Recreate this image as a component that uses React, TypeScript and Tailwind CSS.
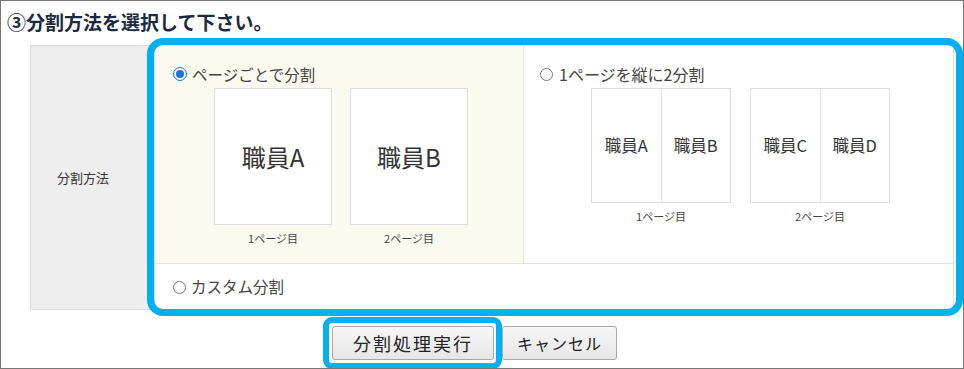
import React from "react";

const font = { fontFamily: '"Noto Sans CJK JP", "Noto Sans", sans-serif' };

const Radio = ({ checked }: { checked?: boolean }) =>
  checked ? (
    <span className="w-[14px] h-[14px] rounded-full border-[1.5px] border-[#1a73e8] flex items-center justify-center bg-white shrink-0">
      <span className="w-[8px] h-[8px] rounded-full bg-[#1a73e8]" />
    </span>
  ) : (
    <span className="w-[13px] h-[13px] rounded-full border border-[#777] bg-white shrink-0" />
  );

const SinglePage = ({ name, caption }: { name: string; caption: string }) => (
  <div className="flex flex-col items-center">
    <div className="w-[118px] h-[137px] bg-white border border-[#ddd] flex items-center justify-center text-[24px] text-[#333]">
      {name}
    </div>
    <div className="mt-[5px] text-[11px] text-[#444]">{caption}</div>
  </div>
);

const SplitPage = ({ left, right, caption }: { left: string; right: string; caption: string }) => (
  <div className="flex flex-col items-center">
    <div className="w-[140px] h-[115px] bg-white border border-[#ddd] flex text-[16.5px] text-[#333]">
      <div className="flex-1 flex items-center justify-center border-r border-[#e2e2e2]">{left}</div>
      <div className="flex-1 flex items-center justify-center">{right}</div>
    </div>
    <div className="mt-[5px] text-[11px] text-[#444]">{caption}</div>
  </div>
);

export default function App() {
  return (
    <div style={font} className="w-[964px] h-[369px] bg-white border border-[#777] overflow-hidden">
      <h2 className="pl-[6px] pt-[9px] h-[44px] text-[19px] font-bold text-[#1b2a40] leading-[24px]">
        ③分割方法を選択して下さい。
      </h2>

      <div className="ml-[29px] w-[924px] flex">
        <div className="w-[125px] h-[265px] bg-[#eeeeee] border border-[#dcdcdc] flex items-center pl-[26px] text-[13px] text-[#333]">
          分割方法
        </div>
        <div className="relative flex-1 border border-l-0 border-[#ddd] flex flex-col">
          <div className="flex h-[218px] border-b border-[#e2e2e2]">
            <div className="w-[369px] bg-[#fbfaef] border-r border-[#e5e5e5] pl-[18px] pt-[19px]">
              <label className="flex items-center gap-[5px] text-[15.5px] text-[#444] leading-[18px]">
                <Radio checked />
                ページごとで分割
              </label>
              <div className="flex gap-[18px] pl-[41px] mt-[5px]">
                <SinglePage name="職員A" caption="1ページ目" />
                <SinglePage name="職員B" caption="2ページ目" />
              </div>
            </div>
            <div className="flex-1 bg-white pl-[16px] pt-[19px]">
              <label className="flex items-center gap-[6px] text-[16px] text-[#444] leading-[18px]">
                <Radio />
                1ページを縦に2分割
              </label>
              <div className="flex gap-[19px] pl-[51px] mt-[5px]">
                <SplitPage left="職員A" right="職員B" caption="1ページ目" />
                <SplitPage left="職員C" right="職員D" caption="2ページ目" />
              </div>
            </div>
          </div>
          <div className="flex-1 flex items-center pl-[18px] pt-[1px] bg-white">
            <label className="flex items-center gap-[5px] text-[15.5px] text-[#444]">
              <Radio />
              カスタム分割
            </label>
          </div>
          {/* annotation highlight */}
          <div className="absolute -left-[8px] -top-[8px] -right-[10px] -bottom-[7px] border-[7px] border-[#00b0f0] rounded-[16px] pointer-events-none" />
        </div>
      </div>

      <div className="flex pl-[331px] pt-[16px] gap-[8px]">
        <div className="relative">
          <button className="w-[162px] h-[34px] rounded-[3px] border border-[#a8a8a8] bg-gradient-to-b from-[#f7f7f7] to-[#e6e6e6] text-[18px] tracking-[2px] text-[#222]">
            分割処理実行
          </button>
          <div className="absolute -left-[9px] -top-[9px] -right-[8px] -bottom-[9px] border-[6px] border-[#00b0f0] rounded-[9px] pointer-events-none" />
        </div>
        <button className="w-[115px] h-[34px] rounded-[3px] border border-[#a8a8a8] bg-gradient-to-b from-[#f7f7f7] to-[#e6e6e6] text-[16px] tracking-[1px] text-[#222]">
          キャンセル
        </button>
      </div>
    </div>
  );
}
